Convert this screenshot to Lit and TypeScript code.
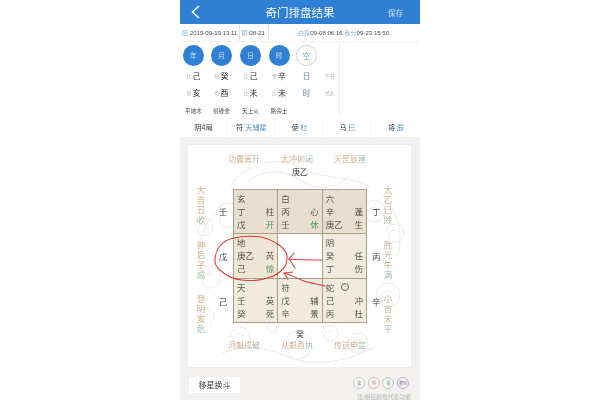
import { LitElement, html, css, svg } from "lit";
import { customElement } from "lit/decorators.js";

const pillars = ["年", "月", "日", "时"];
const row1: [string, string][] = [["比", "己"], ["财", "癸"], ["比", "己"], ["食", "辛"]];
const row2: [string, string][] = [["财", "亥"], ["食", "酉"], ["比", "未"], ["比", "未"]];
const nayin = ["平地木", "剑锋金", "天上火", "路旁土"];

const cells: { tone: string; rows: [string, string, boolean?][]; ring?: boolean }[] = [
  { tone: "t1", rows: [["玄", ""], ["丁", "柱"], ["戊", "开", true]] },
  { tone: "t1", rows: [["白", ""], ["丙", "心"], ["壬", "休", true]] },
  { tone: "t1", rows: [["六", ""], ["辛", "蓬"], ["庚乙", "生"]] },
  { tone: "t2", rows: [["地", ""], ["庚乙", "芮"], ["己", "惊", true]] },
  { tone: "t0", rows: [] },
  { tone: "t3", rows: [["阴", ""], ["癸", "任"], ["丁", "伤"]] },
  { tone: "t3", rows: [["天", ""], ["壬", "英"], ["癸", "死"]] },
  { tone: "t3", rows: [["符", ""], ["戊", "辅"], ["辛", "景"]] },
  { tone: "t3", ring: true, rows: [["蛇", ""], ["己", "冲"], ["丙", "杜"]] },
];

const label = (s: string) => html`${s.slice(0, 3)}<span class="gr">${s.slice(3)}</span>`;

@customElement("app-root")
export class AppRoot extends LitElement {
  static styles = css`
    :host {
      display: block;
      width: 600px;
      height: 400px;
      background: #fff;
      font-family: "Noto Sans CJK SC", "Liberation Sans", sans-serif;
      overflow: hidden;
    }
    .phone {
      width: 240px;
      height: 400px;
      margin: 0 auto;
      display: flex;
      flex-direction: column;
      background: #f2f1ef;
      overflow: hidden;
      filter: blur(0.3px);
    }
    .head {
      height: 24px;
      flex: none;
      background: #2f7fd3;
      color: #fff;
      display: grid;
      grid-template-columns: 60px 1fr 60px;
      align-items: center;
    }
    .head svg { display: block; margin-left: 11px; }
    .title { text-align: center; font-size: 11.5px; line-height: 20px; opacity: .96; }
    .save { font-size: 7.5px; color: #cfe2f6; padding-left: 28px; }

    .info {
      height: 18px;
      flex: none;
      background: #fff;
      display: flex;
      align-items: center;
      font-size: 6.1px;
      color: #4a4a4a;
      white-space: nowrap;
      font-family: "Liberation Sans", "Noto Sans CJK SC", sans-serif;
      border-bottom: 1px solid #f2f2f2;
      box-sizing: border-box;
    }
    .info > div { height: 100%; display: flex; align-items: center; box-sizing: border-box; overflow: hidden; }
    .i1 { width: 60px; padding-left: 2px; border-right: 1px solid #e4e4e4; }
    .i2 { width: 29px; padding-left: 1.5px; border-right: 1px solid #e4e4e4; }
    .i3 { flex: 1; padding-left: 29px; }
    .info i { font-style: normal; color: #8db4d8; }

    .pan {
      height: 76px;
      flex: none;
      background: #fff;
      display: flex;
    }
    .left {
      width: 160px;
      box-sizing: border-box;
      border-right: 1px solid #eeeeee;
      display: grid;
      grid-template-columns: 27px 29px 29px 28px 27px 19px;
      grid-template-rows: 24px 17px 17px 19px;
      align-items: center;
      justify-items: center;
      padding-top: 1px;
      height: 76px;
    }
    .dot {
      width: 21px;
      height: 21px;
      border-radius: 50%;
      background: #2f7fd3;
      color: #d6e6f7;
      font-size: 6.5px;
      display: flex;
      align-items: center;
      justify-content: center;
    }
    .dot.hollow {
      background: #fff;
      border: 1px solid #cfcfcf;
      box-sizing: border-box;
      color: #6f9dc2;
      font-size: 7.5px;
    }
    .gz { font-size: 8px; color: #333; display: flex; align-items: center; gap: 1px; line-height: 10px; }
    .gz small { font-size: 5px; color: #b5b5b5; }
    .kong { font-size: 8px; color: #5d8fc0; }
    .muted { font-size: 5px; color: #b9b9b9; }
    .ny { font-size: 5.6px; color: #444; white-space: nowrap; }

    .bar {
      height: 19px;
      flex: none;
      background: #fff;
      display: grid;
      grid-template-columns: repeat(5, 48px);
      align-items: center;
      justify-items: center;
      font-size: 7.3px;
      color: #3d3d3d;
    }
    .bar span { color: #5f97c4; }
    .bar > div { width: 100%; text-align: center; border-right: 1px solid #f5f5f5; box-sizing: border-box; line-height: 19px; }
    .bar > div:last-child { border-right: 0; }

    .body {
      flex: 1;
      padding: 8px 9px 0 8px;
      display: flex;
      flex-direction: column;
    }
    .card {
      position: relative;
      height: 222px;
      width: 223px;
      flex: none;
      background: #fff;
      display: grid;
      grid-template-columns: 25px 20px 134px 16px 10px 18px;
      grid-template-rows: 44px 134px 44px;
      box-shadow: 0 0 0 1px #efeeec;
    }
    .orn { position: absolute; inset: 0; pointer-events: none; }
    .side {
      grid-row: 1 / -1;
      display: flex;
      flex-direction: column;
      align-items: center;
      font-size: 8.5px;
      color: #d0b08a;
      padding-top: 41px;
      gap: 14.5px;
      position: relative;
    }
    .side.l { grid-column: 1; padding-left: 1px; }
    .side.r { grid-column: 5; }
    .vert {
      writing-mode: vertical-rl;
      letter-spacing: 1.5px;
      height: 40px;
      line-height: 10px;
      white-space: nowrap;
    }
    .gr { color: #a3bbaa; }
    .top, .bottom {
      grid-column: 2 / 5;
      position: relative;
      display: flex;
      flex-direction: column;
      align-items: flex-start;
      font-size: 8px;
    }
    .top { grid-row: 1; padding-top: 8px; }
    .bottom { grid-row: 3; padding-top: 4px; }
    .labels {
      display: flex;
      gap: 21px;
      padding-left: 15px;
      color: #d0b08a;
      line-height: 11px;
      white-space: nowrap;
    }
    .stem {
      align-self: stretch;
      text-align: center;
      color: #4a4a4a;
      line-height: 12px;
      padding-top: 2px;
      padding-left: 4px;
    }
    .bottom .stem { padding-top: 1px; height: 11px; line-height: 11px; }
    .outer {
      position: relative;
      grid-row: 2;
      display: grid;
      grid-template-rows: repeat(3, 1fr);
      align-items: center;
      justify-items: center;
      font-size: 8.5px;
      color: #4a4a4a;
    }
    .outer.l { grid-column: 2; }
    .outer.r { grid-column: 4; justify-items: start; padding-left: 5px; }
    .grid {
      grid-column: 3;
      grid-row: 2;
      position: relative;
      display: grid;
      grid-template-columns: repeat(3, 1fr);
      grid-template-rows: repeat(3, 1fr);
      gap: 1px;
      background: #aa9e88;
      border: 1px solid #aa9e88;
      box-sizing: border-box;
    }
    .cell { padding: 2px 3px 0 3px; font-size: 8.5px; color: #5a5145; min-width: 0; }
    .t0 { background: #fff; }
    .t1 { background: #e8dfce; }
    .t2 { background: #efe6d6; }
    .t3 { background: #f1ebdf; }
    .ln { display: flex; justify-content: space-between; line-height: 13px; height: 13px; align-items: center; white-space: nowrap; }
    .ln b { font-weight: 400; }
    .ln b.go { color: #4f9a62; }
    .ring {
      display: inline-block;
      width: 6px;
      height: 6px;
      border: 0.8px solid #6a6155;
      border-radius: 50%;
      margin-left: 7px;
    }
    .ink { position: absolute; inset: 0; pointer-events: none; z-index: 3; overflow: visible; }

    .foot {
      display: flex;
      justify-content: space-between;
      align-items: flex-start;
      padding-top: 10px;
      padding-left: 1px;
    }
    .btn {
      width: 51px;
      height: 16px;
      background: #fff;
      font-size: 8px;
      line-height: 16px;
      text-align: center;
      color: #3d3d3d;
    }
    .leg { display: flex; flex-direction: column; align-items: flex-end; }
    .chips { display: flex; gap: 2.6px; padding-right: 2px; }
    .chip {
      width: 12px;
      height: 12px;
      box-sizing: border-box;
      border-radius: 50%;
      border: 1px solid #ccc;
      background: #f7f6f5;
      font-size: 4px;
      line-height: 10px;
      text-align: center;
      color: #777;
      white-space: nowrap;
      overflow: hidden;
    }
    .chip.c2 { border-color: #e0b3bd; color: #b8707f; }
    .chip.c3 { border-color: #a9d0ba; color: #6ba083; }
    .chip.c4 { border-color: #bfaad6; color: #8468a6; }
    .note { font-size: 5.8px; color: #b5b5b5; line-height: 8px; margin-top: 4px; white-space: nowrap; }
  `;

  private ornament() {
    const spiral = (x: number, y: number, r: number) =>
      svg`<path d="M${x - r} ${y}a${r} ${r} 0 1 1 ${r} ${r}a${r * 0.65} ${r * 0.65} 0 1 1 ${r * 0.4} ${-r * 1.1}" />`;
    return svg`<svg class="orn" width="223" height="222" viewBox="0 0 223 222" fill="none" stroke="#ecebe6" stroke-width="1">
      ${spiral(16, 82, 9)}${spiral(207, 88, 9)}${spiral(22, 132, 11)}${spiral(200, 150, 12)}
      ${spiral(52, 192, 10)}${spiral(170, 198, 10)}${spiral(110, 200, 14)}${spiral(18, 172, 8)}
      ${spiral(40, 70, 12)}${spiral(186, 66, 11)}${spiral(84, 180, 7)}${spiral(142, 188, 8)}
      <path d="M40 44c16-26 50-34 70-22s50 8 72 20" />
      <path d="M60 36c18-14 40-10 54 0s36 8 48-6" />
      <path d="M12 120c-4-20 4-44 22-60" /><path d="M210 110c6-24-2-48-18-62" />
      <path d="M30 210c30-14 50-6 70 2s54 8 86-10" />
    </svg>`;
  }

  private ink() {
    return svg`<svg class="ink" width="134" height="134" viewBox="233 189 134 134" fill="none" stroke="#d8403a" stroke-width="1.1" stroke-linecap="round" stroke-linejoin="round">
      <path d="M233 237C240 235 252 235 260 236C268 238 274 241 278 244C283 248 287 252 286 256C286 261 285 265 282 268C278 272 274 275 269 276C262 279 250 280 241 279C233 279 226 275 220 270C216 267 214 264 214 260C214 254 215 250 218 246C222 241 227 238 233 237Z" />
      <path d="M321 259C310 259 298 259 288 258" />
      <path d="M293 252L288 258L294 267" />
      <path d="M324 285C316 283 309 282 303 280C296 277 290 274 283 272" />
      <path d="M292 271L283 272L287 278" />
    </svg>`;
  }

  render() {
    return html`<div class="phone">
      <div class="head">
        <svg width="20" height="18" viewBox="0 0 20 18" fill="none" stroke="#fff" stroke-width="1.4"><polyline points="8,3 1.5,9 8,15" /></svg>
        <div class="title">奇门排盘结果</div>
        <div class="save">保存</div>
      </div>
      <div class="info">
        <div class="i1"><i>阳</i>&nbsp;2019-09-19 13:11</div>
        <div class="i2"><i>阴</i>&nbsp;08-21</div>
        <div class="i3"><i>白露</i>09-08 06:16 <i>&nbsp;秋分</i>09-23 15:50</div>
      </div>
      <div class="pan">
        <div class="left">
          ${pillars.map((p) => html`<div class="dot">${p}</div>`)}
          <div class="dot hollow">空</div><div></div>
          ${row1.map(([a, b]) => html`<div class="gz"><small>${a}</small>${b}</div>`)}
          <div class="kong">日</div><div class="muted">子丑</div>
          ${row2.map(([a, b]) => html`<div class="gz"><small>${a}</small>${b}</div>`)}
          <div class="kong">时</div><div class="muted">戌亥</div>
          ${nayin.map((n) => html`<div class="ny">${n}</div>`)}
        </div>
      </div>
      <div class="bar">
        <div>阴4局</div>
        <div>符 <span>天辅星</span></div>
        <div>使 <span>杜</span></div>
        <div>马 <span>巳</span></div>
        <div>将 <span>辰</span></div>
      </div>
      <div class="body">
        <div class="card">
          ${this.ornament()}
          <div class="side l">
            <div class="vert">${label("大吉丑收")}</div>
            <div class="vert">${label("神后子成")}</div>
            <div class="vert">${label("登明亥危")}</div>
          </div>
          <div class="top">
            <div class="labels"><div>${label("功曹寅开")}</div><div>${label("太冲卯闭")}</div><div>${label("天罡辰建")}</div></div>
            <div class="stem">庚乙</div>
          </div>
          <div class="outer l"><div>壬</div><div>戊</div><div>己</div></div>
          <div class="grid">
            ${cells.map(
              (c) => html`<div class="cell ${c.tone}">
                ${c.rows.map(
                  ([a, b, go], i) => html`<div class="ln">
                    <span>${a}${c.ring && i === 0 ? html`<span class="ring"></span>` : ""}</span>
                    <b class=${go ? "go" : ""}>${b}</b>
                  </div>`
                )}
              </div>`
            )}
            ${this.ink()}
          </div>
          <div class="outer r"><div>丁</div><div>丙</div><div>辛</div></div>
          <div class="side r">
            <div class="vert">${label("太乙巳除")}</div>
            <div class="vert">${label("胜光午满")}</div>
            <div class="vert">${label("小吉未平")}</div>
          </div>
          <div class="bottom">
            <div class="stem">癸</div>
            <div class="labels"><div>${label("河魁戌破")}</div><div>${label("从魁酉执")}</div><div>${label("传送申定")}</div></div>
          </div>
        </div>
        <div class="foot">
          <div class="btn">移星换斗</div>
          <div class="leg">
            <div class="chips">
              <div class="chip">害</div><div class="chip c2">刑</div><div class="chip c3">破</div><div class="chip c4">墓刑</div>
            </div>
            <div class="note">注:相应颜色代表功能</div>
          </div>
        </div>
      </div>
    </div>`;
  }
}
